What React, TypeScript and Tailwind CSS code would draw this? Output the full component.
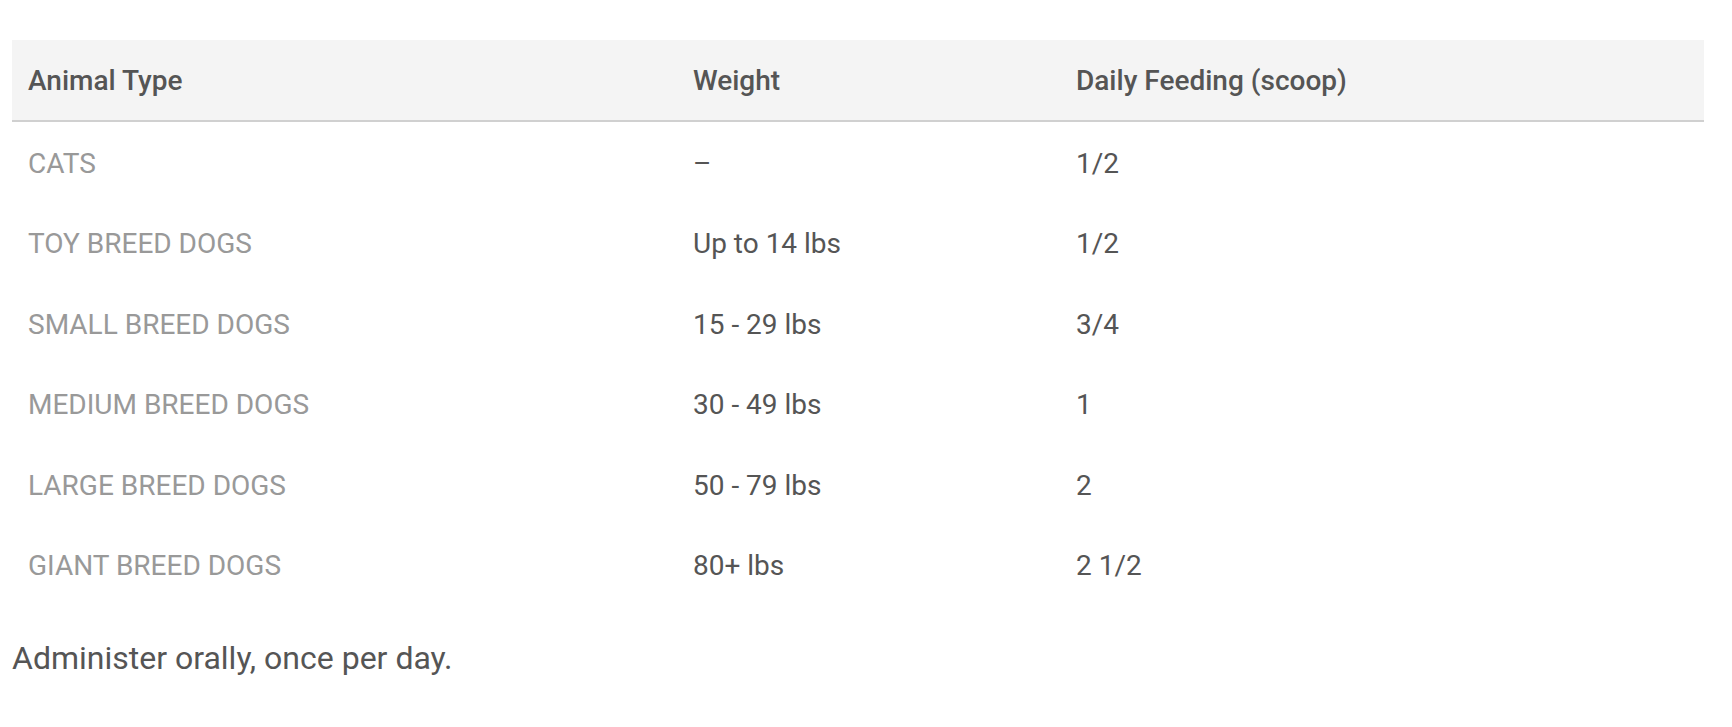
const rows = [
  { type: 'Cats', weight: '–', scoop: '1/2' },
  { type: 'Toy Breed Dogs', weight: 'Up to 14 lbs', scoop: '1/2' },
  { type: 'Small Breed Dogs', weight: '15 - 29 lbs', scoop: '3/4' },
  { type: 'Medium Breed Dogs', weight: '30 - 49 lbs', scoop: '1' },
  { type: 'Large Breed Dogs', weight: '50 - 79 lbs', scoop: '2' },
  { type: 'Giant Breed Dogs', weight: '80+ lbs', scoop: '2 1/2' },
]

export default function App() {
  return (
    <div className="min-h-screen bg-white font-['Roboto',sans-serif] text-[#555]">
      <div className="w-[1704px] pl-[12px] pt-[40px]">
        {/* Feeding chart */}
        <table className="w-full border-collapse text-left">
          <thead>
            <tr className="h-[81px] bg-[#f4f4f4] border-b-2 border-[#d0d0d0]">
              <th className="w-[665px] px-[16px] pt-[1px] text-[28px] font-medium">Animal Type</th>
              <th className="w-[383px] px-[16px] pt-[1px] text-[28px] font-medium">Weight</th>
              <th className="px-[16px] pt-[1px] text-[28px] font-medium">Daily Feeding (scoop)</th>
            </tr>
          </thead>
          <tbody>
            {rows.map((r) => (
              <tr key={r.type} className="h-[80.5px] text-[28px]">
                <td className="px-[16px] pt-[5px] uppercase text-[#999]">{r.type}</td>
                <td className="px-[16px] pt-[5px]">{r.weight}</td>
                <td className="px-[16px] pt-[5px]">{r.scoop}</td>
              </tr>
            ))}
          </tbody>
        </table>
        <p className="mt-[30px] text-[32px]">Administer orally, once per day.</p>
      </div>
    </div>
  )
}
